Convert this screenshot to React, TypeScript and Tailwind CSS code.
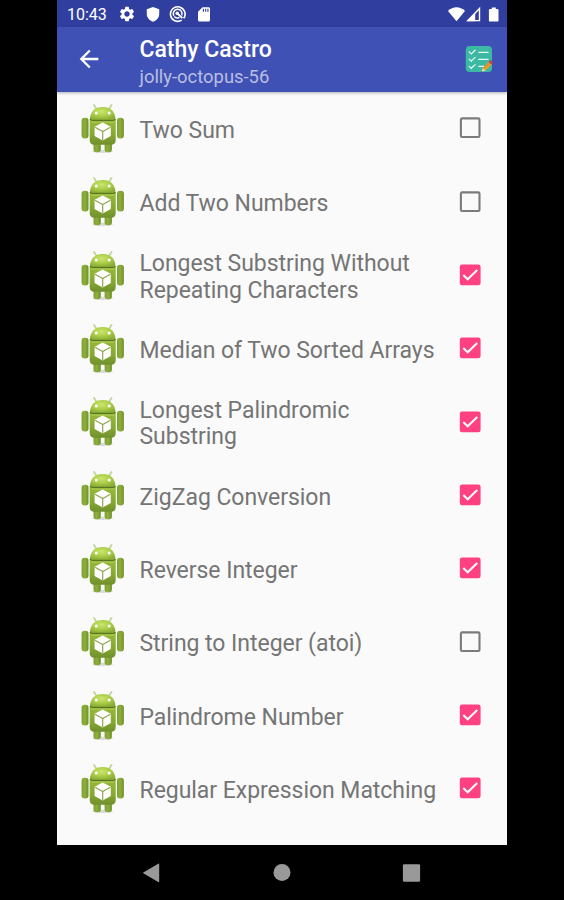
import React from "react";

type Task = { title: string; done: boolean };

const tasks: Task[] = [
  { title: "Two Sum", done: false },
  { title: "Add Two Numbers", done: false },
  { title: "Longest Substring Without Repeating Characters", done: true },
  { title: "Median of Two Sorted Arrays", done: true },
  { title: "Longest Palindromic Substring", done: true },
  { title: "ZigZag Conversion", done: true },
  { title: "Reverse Integer", done: true },
  { title: "String to Integer (atoi)", done: false },
  { title: "Palindrome Number", done: true },
  { title: "Regular Expression Matching", done: true },
];

function GearIcon() {
  return (
    <svg viewBox="0 0 24 24" className="size-[18px]" fill="#fff">
      <path d="M19.14 12.94c.04-.3.06-.61.06-.94 0-.32-.02-.64-.07-.94l2.03-1.58a.49.49 0 0 0 .12-.61l-1.92-3.32a.488.488 0 0 0-.59-.22l-2.39.96c-.5-.38-1.03-.7-1.62-.94l-.36-2.54a.484.484 0 0 0-.48-.41h-3.84c-.24 0-.43.17-.47.41l-.36 2.54c-.59.24-1.13.57-1.62.94l-2.39-.96c-.22-.08-.47 0-.59.22L2.74 8.87c-.12.21-.08.47.12.61l2.03 1.58c-.05.3-.09.63-.09.94s.02.64.07.94l-2.03 1.58a.49.49 0 0 0-.12.61l1.92 3.32c.12.22.37.29.59.22l2.39-.96c.5.38 1.03.7 1.62.94l.36 2.54c.05.24.24.41.48.41h3.84c.24 0 .44-.17.47-.41l.36-2.54c.59-.24 1.13-.56 1.62-.94l2.39.96c.22.08.47 0 .59-.22l1.92-3.32c.12-.22.07-.47-.12-.61l-2.01-1.58zM12 15.600c-1.980 0-3.600-1.620-3.600-3.600s1.620-3.600 3.600-3.600 3.600 1.620 3.600 3.600-1.620 3.600-3.600 3.600z" />
    </svg>
  );
}

function ShieldIcon() {
  return (
    <svg viewBox="0 0 24 24" className="size-[18px]" fill="#fff">
      <path d="M12 2.500 3.700 5.700v6c0 5.100 3.500 9.100 8.300 10.600 4.800-1.500 8.300-5.500 8.300-10.600v-6z" />
    </svg>
  );
}

function TargetIcon() {
  return (
    <svg viewBox="0 0 18 18" className="size-[18px]" fill="none" stroke="#fff">
      <path d="M14.700 13.300A7.300 7.300 0 1 0 12.700 15.200" strokeWidth="1.600" />
      <path d="M4.900 10.900A4.400 4.400 0 1 1 12.700 10.400" strokeWidth="1.500" />
      <path d="M5.200 11.400q2.100 2.300 5.300 1.100" strokeWidth="1.500" />
      <circle cx="8.200" cy="8.200" r="1.700" fill="#fff" stroke="none" />
      <path d="m8.200 8.200 5.200 4.900" strokeWidth="1.900" />
    </svg>
  );
}

function SdIcon() {
  return (
    <svg viewBox="0 0 24 24" className="size-[18px]" fill="#fff">
      <path d="M18 3h-8L4 9v11c0 1.100.9 2 2 2h12c1.100 0 2-.9 2-2V5c0-1.100-.9-2-2-2zm-6 6h-1.500V5H12v4zm3 0h-1.500V5H15v4zm3 0h-1.500V5H18v4z" />
    </svg>
  );
}

function StatusBar() {
  return (
    <div className="flex h-[27px] items-center bg-[#303f9f] pl-[10px] pr-[7px] pt-px text-white">
      <span className="w-[51px] pt-[2px] text-[16px] leading-none">10:43</span>
      <div className="flex gap-[7.500px]">
        <GearIcon />
        <ShieldIcon />
        <TargetIcon />
        <SdIcon />
      </div>
      <svg viewBox="0 0 52 18" className="ml-auto h-[18px] w-[52px]" fill="#fff">
        <path d="M0 6C5 1 12 1 17 6L8.500 16.300z" />
        <path d="M19.900 15.600 31.500 3.600v12z" fill="none" stroke="#fff" strokeWidth="1.400" />
        <path d="M18.500 16.200 27.200 7.500v8.700z" />
        <path d="M42.100 4h1.700V2.600h4V4h1.500q1.200 0 1.200 1.200v10.200q0 1.200-1.200 1.200h-7.200q-1.200 0-1.200-1.200V5.200q0-1.200 1.200-1.200z" />
      </svg>
    </div>
  );
}

function ChecklistIcon() {
  return (
    <svg viewBox="0 0 28 28" className="size-[28px]" fill="none">
      <rect x=".8" y="1" width="26.200" height="26" rx="3.800" fill="#3bb9a3" />
      <path
        d="m4.200 6.900 2 2 3.900-3.700M4.200 14.100l2 2 3.900-3.700M4.200 21.300l2 2 3.900-3.700M13.700 7.300h9.500M13.700 14.300h9.500M13.700 21.300h5"
        stroke="#e9f7f1"
        strokeWidth="1.200"
        strokeLinecap="round"
      />
      <path d="m17.800 22.900 6-6.200 2.800 2.700-6.100 6.200z" fill="#f39a26" />
      <path d="m18.700 23.800 6.100-6.200" stroke="#d87b20" strokeWidth=".8" />
      <path d="m17.800 22.900-1.500 4.200 4.200-1.500z" fill="#f6d5a0" />
      <path d="m16.700 25.900-.5 1.300 1.300-.5z" fill="#333" />
      <path d="m23.500 17 1.400-1.400q1-.8 2 .2t.9 2l-1.500 1.800z" fill="#bf4546" />
    </svg>
  );
}

function AppBar() {
  return (
    <header className="relative z-10 flex h-[65px] items-center bg-[#3f51b5] pb-px shadow-[0_1px_3px_rgba(0,0,0,0.3)]">
      <button aria-label="Back" className="flex w-[82.500px] pl-[18px]">
        <svg viewBox="0 0 24 24" className="size-[28px]" fill="#fff">
          <path d="M20 11H7.830l5.590-5.590L12 4l-8 8 8 8 1.410-1.410L7.830 13H20v-2z" />
        </svg>
      </button>
      <div className="flex-1 pt-[7px]">
        <h1 className="text-[23px] font-medium leading-[28px] tracking-[-0.030px] text-white">Cathy Castro</h1>
        <p className="text-[18.400px] leading-[26px] text-[#b8bfe3]">jolly-octopus-56</p>
      </div>
      <button aria-label="Edit checklist" className="mr-[14px]">
        <ChecklistIcon />
      </button>
    </header>
  );
}

function RobotIcon() {
  return (
    <svg viewBox="0 1.700 60 64" className="h-[64px] w-[60px] shrink-0">
      <defs>
        <linearGradient id="limb" x1="0" x2="1" y1="0" y2="0">
          <stop offset="0" stopColor="#7c9f34" />
          <stop offset=".45" stopColor="#8eb039" />
          <stop offset="1" stopColor="#6f902d" />
        </linearGradient>
        <linearGradient id="torso" x1="0" x2="0" y1="0" y2="1">
          <stop offset="0" stopColor="#98ba39" />
          <stop offset=".6" stopColor="#86a832" />
          <stop offset="1" stopColor="#708f2d" />
        </linearGradient>
        <radialGradient id="head" cx=".45" cy=".35" r=".65">
          <stop offset="0" stopColor="#cbe56d" />
          <stop offset=".5" stopColor="#aed04b" />
          <stop offset="1" stopColor="#8bae36" />
        </radialGradient>
      </defs>
      <ellipse cx="28.500" cy="56" rx="10.500" ry="1.600" fill="#777" opacity=".25" />
      <rect x="19.500" y="45" width="7.300" height="12" rx="3" fill="url(#limb)" />
      <rect x="30.600" y="45" width="7.300" height="12" rx="3" fill="url(#limb)" />
      <rect x="7.600" y="22.500" width="6.900" height="20.800" rx="3" fill="url(#limb)" />
      <rect x="43" y="22.500" width="6.900" height="20.800" rx="3" fill="url(#limb)" />
      <path d="m20 9.700 2.700 4.300M37.500 9.700l-2.700 4.300" stroke="#c4d69a" strokeWidth="1.900" strokeLinecap="round" />
      <path d="M15.900 24.600C16 16.500 20.700 11.800 28.700 11.800s12.700 4.700 12.800 12.800z" fill="url(#head)" />
      <path d="M15.700 24.300h26v20.500q0 4.700-4.700 4.700H20.400q-4.700 0-4.700-4.700z" fill="url(#torso)" />
      <path d="M16 23.800q1.200 1.400 4 1.400h17.500q2.800 0 4-1.400" stroke="#58751f" strokeWidth="1.300" fill="none" />
      <path d="M17.500 26.700h22.400" stroke="#bad65e" strokeWidth=".9" fill="none" />
      <circle cx="22.200" cy="17.700" r="1.500" fill="#fff" />
      <circle cx="35.200" cy="17.700" r="1.500" fill="#fff" />
      <path d="m28.700 27.300 8.100 4.200v9.200L28.700 45.300l-8.100-4.600v-9.200z" fill="#fff" />
      <path d="m21 31.900 7.700 4.300 7.700-4.300M28.700 36.200v8.600" fill="none" stroke="#91a653" strokeWidth="1.200" />
    </svg>
  );
}

function Checkbox({ checked }: { checked: boolean }) {
  return (
    <svg
      viewBox="0 0 22 22"
      className="mb-[1.500px] size-[22px] shrink-0"
      role="checkbox"
      aria-checked={checked}
      fill="none"
    >
      {checked ? (
        <>
          <rect x=".8" y=".4" width="20.800" height="20.800" rx="2.300" fill="#ff4081" />
          <path d="m4.300 11 4.400 4.300 9.500-9.400" stroke="#fafafa" strokeWidth="2.100" />
        </>
      ) : (
        <rect x="1.900" y="1.400" width="18.600" height="18.600" rx="1.300" stroke="#7b7b7b" strokeWidth="2.100" />
      )}
    </svg>
  );
}

function TaskRow({ task }: { task: Task }) {
  return (
    <li className="flex h-[73.330px] items-center pl-[17px] pr-[26px]">
      <RobotIcon />
      <span className="ml-[5.500px] w-[308px] pr-2 pt-[4px] text-[23px] leading-[26.500px] tracking-[-0.040px] text-[#757575]">
        {task.title}
      </span>
      <span className="ml-auto flex">
        <Checkbox checked={task.done} />
      </span>
    </li>
  );
}

function NavBar() {
  return (
    <nav className="flex h-[55px] items-center justify-center bg-black">
      <svg viewBox="0 0 290 24" className="h-[24px] w-[290px]" fill="#999">
        <path d="M6.300 11.500 21.200 2.700q1-.5 1 .6v17.200q0 1.100-1 .5L6.300 12.200q-.6-.4 0-.7z" />
        <circle cx="145" cy="11.600" r="8.500" />
        <rect x="265.900" y="3.200" width="17.200" height="17.600" rx="1.300" />
      </svg>
    </nav>
  );
}

export default function App() {
  return (
    <div className="flex h-[900px] w-[564px] justify-center overflow-hidden bg-black font-[Roboto,sans-serif]">
      <main className="flex w-[450px] flex-col">
        <StatusBar />
        <AppBar />
        <ul className="flex-1 bg-[#fafafa] pt-[0.500px]">
          {tasks.map((task) => (
            <TaskRow key={task.title} task={task} />
          ))}
        </ul>
        <NavBar />
      </main>
    </div>
  );
}
